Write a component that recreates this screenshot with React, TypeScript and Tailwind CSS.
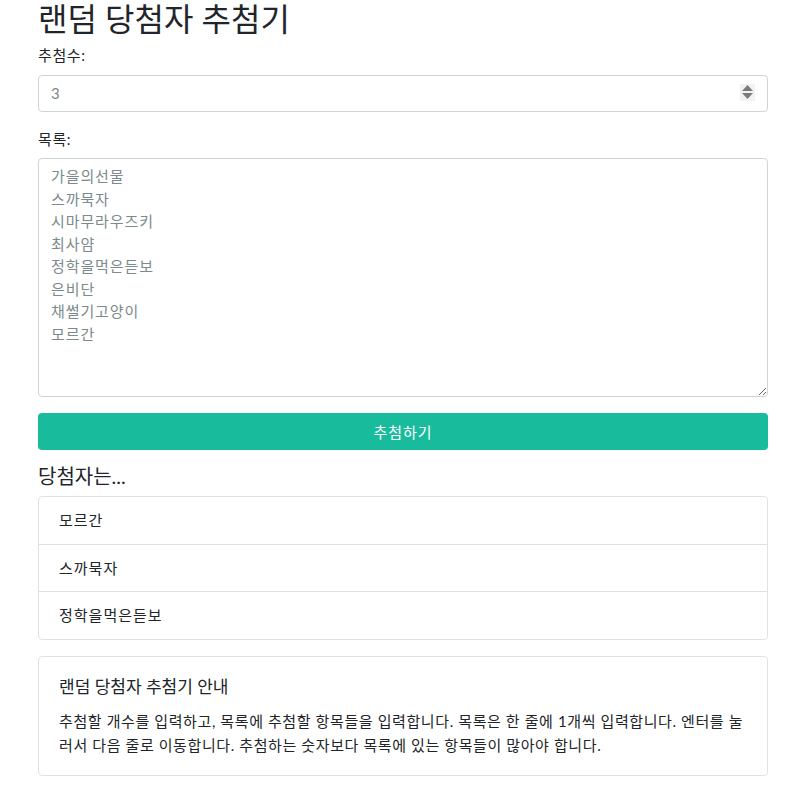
const names = ["가을의선물", "스까묵자", "시마무라우즈키", "최사얌", "정학을먹은듣보", "은비단", "채썰기고양이", "모르간"];
const winners = ["모르간", "스까묵자", "정학을먹은듣보"];

export default function App() {
  return (
    <div className="min-h-screen bg-white text-[#212529] text-[15px] leading-[1.5] [font-family:Lato,'Noto_Sans_CJK_KR',sans-serif]">
      <div className="mx-[38px] w-[730px]">
        <h1 className="text-[32px] leading-[1.2] font-normal mb-[6px]">랜덤 당첨자 추첨기</h1>

        <label className="block mb-2 tracking-[0.6px]">추첨수:</label>
        <div className="relative mb-4">
          <input
            type="number"
            defaultValue={3}
            className="block w-full h-[37px] px-3 rounded border border-[#ced4da] text-[#7b8a8b] outline-none [appearance:textfield] [&::-webkit-inner-spin-button]:appearance-none [&::-webkit-outer-spin-button]:appearance-none"
          />
          {/* fake spinner, always visible like the reference */}
          <div className="absolute right-[13px] top-[9px] w-[15px] h-[17px] bg-[#f2f2f2] flex flex-col items-center justify-center gap-[2px]">
            <svg width="11" height="6" viewBox="0 0 11 6"><path d="M5.5 0L11 6H0z" fill="#7a7a7a" /></svg>
            <svg width="11" height="6" viewBox="0 0 11 6"><path d="M0 0h11L5.5 6z" fill="#7a7a7a" /></svg>
          </div>
        </div>

        <label className="block mb-2 tracking-[0.6px]">목록:</label>
        <textarea
          defaultValue={names.join("\n")}
          className="block w-full h-[239px] px-3 py-[6px] rounded border border-[#ced4da] text-[#7b8a8b] leading-[1.5] tracking-[0.9px] outline-none"
        />

        <button className="mt-4 w-full h-[37px] rounded bg-[#18bc9c] text-white tracking-[0.9px]">추첨하기</button>

        <h4 className="text-[20px] leading-[1.2] mt-[14px] mb-2">당첨자는...</h4>
        <ul className="border border-[#dee2e6] rounded">
          {winners.map((w, i) => (
            <li
              key={w}
              className={`px-5 py-3 tracking-[1px] ${i > 0 ? "border-t border-[#dee2e6]" : ""}`}
            >
              {w}
            </li>
          ))}
        </ul>

        <div className="mt-4 border border-[#dee2e6] rounded px-5 pt-5 pb-[18px]">
          <h5 className="text-[17px] leading-[1.2] mb-3">랜덤 당첨자 추첨기 안내</h5>
          <p className="leading-[1.6] tracking-[0.6px] break-all">
            추첨할 개수를 입력하고, 목록에 추첨할 항목들을 입력합니다. 목록은 한 줄에 1개씩 입력합니다. 엔터를 눌러서 다음 줄로 이동합니다. 추첨하는 숫자보다 목록에 있는 항목들이 많아야 합니다.
          </p>
        </div>
      </div>
    </div>
  );
}
